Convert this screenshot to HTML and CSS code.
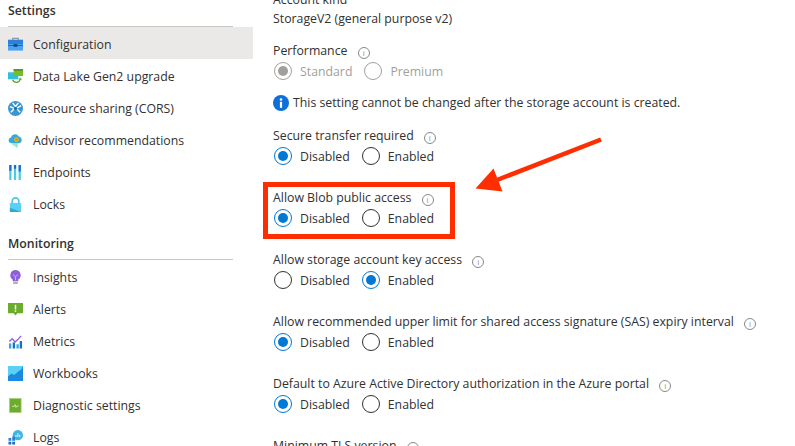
FILE: index.html
```html
<!DOCTYPE html>
<html lang="en">
<head>
<meta charset="UTF-8" />
<meta name="viewport" content="width=device-width, initial-scale=1.0" />
<title>Configuration</title>
<link rel="stylesheet" href="styles.css">
</head>
<body>
<div class="page">
<!-- sidebar -->
<nav class="sidebar">
<h3 class="nav-title first">Settings</h3>
<a class="nav-item active">
<svg class="nav-icon" viewBox="0 0 16 16"><path d="M5 3.500V1.500h6v2" fill="none" stroke="#8a9bb0" stroke-width="1.200"/><rect x="0" y="3" width="16" height="11.500" fill="#4aa3f0"/><rect x="0" y="3" width="16" height="4.500" fill="#2f80dc"/><rect x="0" y="8.500" width="16" height="1" fill="#1b62b0"/><rect x="6" y="7.500" width="4" height="3" fill="#0f4c8a"/></svg>
<span>Configuration</span>
</a>
<a class="nav-item">
<svg class="nav-icon" viewBox="0 0 16 16"><rect x="0" y="3.500" width="11" height="7.500" fill="#32bedd"/><rect x="6" y="0" width="10" height="7.500" fill="#76bc2d"/><rect x="6" y="0" width="10" height="2" fill="#5e9624"/><path d="M5 11.500c1 3.500 7 3.800 8-.5" fill="none" stroke="#5ea82a" stroke-width="1.300"/><path d="M11 11.500l2-2.500 2 2.500z" fill="#5ea82a"/></svg>
<span>Data Lake Gen2 upgrade</span>
</a>
<a class="nav-item">
<svg class="nav-icon" viewBox="0 0 16 16"><circle cx="8" cy="8" r="8" fill="#3a96cf"/><path d="M2 6l5 2-4 4M14 5l-5 3 4 4M5 2l3 4 3-4" fill="none" stroke="#fff" stroke-width="1.500"/><circle cx="8" cy="8" r="1.800" fill="#1f6fa8"/></svg>
<span>Resource sharing (CORS)</span>
</a>
<a class="nav-item">
<svg class="nav-icon" viewBox="0 0 16 16"><path d="M3.500 11a3.200 3.200 0 0 1-.4-6.300A4.500 4.500 0 0 1 11.500 3.800 3.700 3.700 0 0 1 12 11z" fill="#32a9e0"/><circle cx="9" cy="7" r="2.500" fill="#f5b800"/><rect x="7.800" y="5.800" width="2.400" height="2.400" fill="#d98f00"/><path d="M7.500 11v3.500M9.500 11v4.500M5.500 11v2" stroke="#5fd0c5" stroke-width="1.200"/></svg>
<span>Advisor recommendations</span>
</a>
<a class="nav-item">
<svg class="nav-icon" viewBox="0 0 16 16"><path d="M2.500 0v16M7.500 0v16M12.500 0v16" fill="none" stroke="#4ccbe8" stroke-width="2.400"/><path d="M2.500 0v6M7.500 0v4M12.500 0v7" fill="none" stroke="#1a6fc9" stroke-width="2.400"/></svg>
<span>Endpoints</span>
</a>
<a class="nav-item">
<svg class="nav-icon" viewBox="0 0 16 16"><path d="M4.500 7V4.500a3.500 3.500 0 0 1 7 0V7" fill="none" stroke="#4cc6ee" stroke-width="1.800"/><rect x="2" y="6.500" width="12" height="9.500" rx="0.500" fill="#5ad0f5"/><path d="M2 16v-4.500l12 4.500z" fill="#2fa8d8"/></svg>
<span>Locks</span>
</a>

<h3 class="nav-title">Monitoring</h3>
<a class="nav-item">
<svg class="nav-icon" viewBox="0 0 16 16"><path d="M8 0a5.500 5.500 0 0 0-3 10.100V12h6v-1.900A5.500 5.500 0 0 0 8 0z" fill="#8c5fdc"/><path d="M5.500 5l2.500 2 2.500-2M8 7v4" fill="none" stroke="#d6c4f5" stroke-width="0.900"/><rect x="5.500" y="12.500" width="5" height="2.500" fill="#b3b3b3"/></svg>
<span>Insights</span>
</a>
<a class="nav-item">
<svg class="nav-icon" viewBox="0 0 16 16"><path d="M0 1h16v11H10l-2 2.500L6 12H0z" fill="#6bac2b"/><rect x="7.200" y="3" width="1.600" height="5" fill="#fff"/><rect x="7.200" y="9" width="1.600" height="1.600" fill="#fff"/></svg>
<span>Alerts</span>
</a>
<a class="nav-item">
<svg class="nav-icon" viewBox="0 0 16 16"><path d="M1.500 8l3-3 3 3.500 3-2.500 3.500-4" fill="none" stroke="#8c5fdc" stroke-width="1.400"/><rect x="1" y="10" width="2.500" height="5.500" fill="#32a9e0"/><rect x="5" y="9" width="2.500" height="6.500" fill="#1a6fc9"/><rect x="9" y="11" width="2.500" height="4.500" fill="#32a9e0"/><rect x="12.500" y="7.500" width="2.500" height="8" fill="#1a6fc9"/></svg>
<span>Metrics</span>
</a>
<a class="nav-item">
<svg class="nav-icon" viewBox="0 0 16 16"><rect x="0" y="0" width="16" height="16" fill="#5ad0f5"/><path d="M0 11l4-3 2.500 1.500L12 5l2-1 2-4V16H0z" fill="#1a8ae0"/></svg>
<span>Workbooks</span>
</a>
<a class="nav-item">
<svg class="nav-icon" viewBox="0 0 16 16"><rect x="1.500" y="0.500" width="12.500" height="15" fill="#6bac2b" stroke="#a9cf7e" stroke-width="0.800"/><path d="M4.500 9h2l1-2 1 3 1-1.500h2" fill="none" stroke="#e6f2d8" stroke-width="0.800"/></svg>
<span>Diagnostic settings</span>
</a>
<a class="nav-item">
<svg class="nav-icon" viewBox="0 0 16 16"><circle cx="10.500" cy="5.500" r="5.500" fill="#3ab5e6"/><path d="M8.500 7.500V5.500M10.500 7.500V3.500M12.500 7.500V5" stroke="#fff" stroke-width="1"/><rect x="0.500" y="8.500" width="3" height="3" fill="#2f7fd6"/><rect x="4.500" y="7" width="3" height="4.500" fill="#2f7fd6"/><rect x="0.500" y="12.500" width="3" height="3" fill="#1a6fc9"/><rect x="4.500" y="12.500" width="3" height="3" fill="#1a6fc9"/></svg>
<span>Logs</span>
</a>
</nav>

<!-- config form -->
<main class="content">
<div class="label-row">Account kind</div>
<div class="value-row">StorageV2 (general purpose v2)</div>

<div class="label-row">Performance <i class="tip">i</i></div>
<div class="radio-row disabled">
<label class="opt"><span class="radio on"></span>Standard</label>
<label class="opt"><span class="radio"></span>Premium</label>
</div>

<div class="notice">
<svg class="notice-icon" viewBox="0 0 16 16"><circle cx="8" cy="8" r="8" fill="#0f6fd8"/><rect x="6.900" y="6.800" width="2.200" height="6" fill="#fff"/><circle cx="8" cy="4.500" r="1.300" fill="#fff"/></svg>
This setting cannot be changed after the storage account is created.
</div>

<div class="field">
<div class="label-row">Secure transfer required <i class="tip">i</i></div>
<div class="radio-row">
<label class="opt"><span class="radio on"></span>Disabled</label>
<label class="opt"><span class="radio"></span>Enabled</label>
</div>
</div>

<div class="field">
<div class="label-row">Allow Blob public access <i class="tip">i</i></div>
<div class="radio-row">
<label class="opt"><span class="radio on"></span>Disabled</label>
<label class="opt"><span class="radio"></span>Enabled</label>
</div>
</div>

<div class="field">
<div class="label-row">Allow storage account key access <i class="tip">i</i></div>
<div class="radio-row">
<label class="opt"><span class="radio"></span>Disabled</label>
<label class="opt"><span class="radio on"></span>Enabled</label>
</div>
</div>

<div class="field">
<div class="label-row">Allow recommended upper limit for shared access signature (SAS) expiry interval <i class="tip">i</i></div>
<div class="radio-row">
<label class="opt"><span class="radio on"></span>Disabled</label>
<label class="opt"><span class="radio"></span>Enabled</label>
</div>
</div>

<div class="field">
<div class="label-row">Default to Azure Active Directory authorization in the Azure portal <i class="tip">i</i></div>
<div class="radio-row">
<label class="opt"><span class="radio on"></span>Disabled</label>
<label class="opt"><span class="radio"></span>Enabled</label>
</div>
</div>

<div class="label-row">Minimum TLS version <i class="tip">i</i></div>
</main>
</div>

<!-- red annotation drawn over the screenshot -->
<div class="mark-box"></div>
<svg class="mark-arrow" viewBox="0 0 795 446">
<path d="M601 139.500L497 180" fill="none" stroke="#ff2e00" stroke-width="4.500"/>
<path d="M475.500 188.500L493.500 168.500L502.500 191.500z" fill="#ff2e00"/>
</svg>
</body>
</html>
```

FILE: styles.css
```css
/* base */
html,
body {
  margin: 0;
  padding: 0;
  height: 100%;
  overflow: hidden;
}
body {
  background-color: white;
  color: #323130;
  font-family: "Open Sans", "Noto Sans", sans-serif;
  font-size: 12.3px;
  position: relative;
}
.page {
  display: flex;
  height: 446px;
  overflow: hidden;
}

/* sidebar */
.sidebar {
  width: 253px;
  flex: none;
}
.nav-title {
  margin: 10px 20px 0 8px;
  height: 31px;
  line-height: 30px;
  font-size: 12.3px;
  font-weight: 600;
  border-bottom: 1px solid #c8c6c4;
  box-sizing: border-box;
}
.nav-title.first {
  margin-top: -4px;
}
.nav-item {
  display: flex;
  align-items: center;
  gap: 10px;
  height: 32px;
  box-sizing: border-box;
  padding: 2px 0 0 8px;
}
.nav-item.active {
  background-color: #ebe9e8;
}
.nav-icon {
  width: 15px;
  height: 15px;
  flex: none;
}

/* form */
.content {
  margin: -11px 0 0 20px;
  flex: 1;
}
.label-row,
.value-row {
  height: 20px;
  line-height: 22px;
  white-space: nowrap;
}
.value-row {
  line-height: 20px;
  margin-bottom: 11px;
}
.tip {
  display: inline-block;
  width: 10px;
  height: 10px;
  margin-left: 7px;
  border: 1px solid #8a8886;
  border-radius: 50%;
  color: #8a8886;
  font-size: 8px;
  font-style: normal;
  line-height: 10px;
  text-align: center;
  vertical-align: -1px;
}
.radio-row {
  display: flex;
  gap: 12px;
  height: 22px;
  align-items: center;
  padding-left: 1px;
}
.radio-row.disabled {
  color: #a19f9d;
  margin-bottom: 10px;
}
.opt {
  display: flex;
  align-items: center;
  gap: 8px;
}
.radio {
  width: 18px;
  height: 18px;
  box-sizing: border-box;
  border: 1px solid #323130;
  border-radius: 50%;
  display: flex;
  align-items: center;
  justify-content: center;
}
.radio.on {
  border-color: #0078d4;
}
.radio.on::after {
  content: "";
  width: 10px;
  height: 10px;
  border-radius: 50%;
  background-color: #0078d4;
}
.disabled .radio {
  border-color: #a19f9d;
}
.disabled .radio.on::after {
  background-color: #a19f9d;
}
.notice {
  display: flex;
  align-items: center;
  gap: 4px;
  height: 20px;
  box-sizing: border-box;
  padding-top: 1px;
  white-space: nowrap;
  margin-bottom: 13px;
}
.notice-icon {
  width: 16px;
  height: 16px;
  flex: none;
}
.field {
  margin-bottom: 20px;
}

/* annotation */
.mark-box {
  position: absolute;
  left: 263px;
  top: 182px;
  width: 192px;
  height: 57px;
  box-sizing: border-box;
  border: 5px solid #ff2e00;
}
.mark-arrow {
  position: absolute;
  left: 0;
  top: 0;
  width: 795px;
  height: 446px;
  pointer-events: none;
}
```
